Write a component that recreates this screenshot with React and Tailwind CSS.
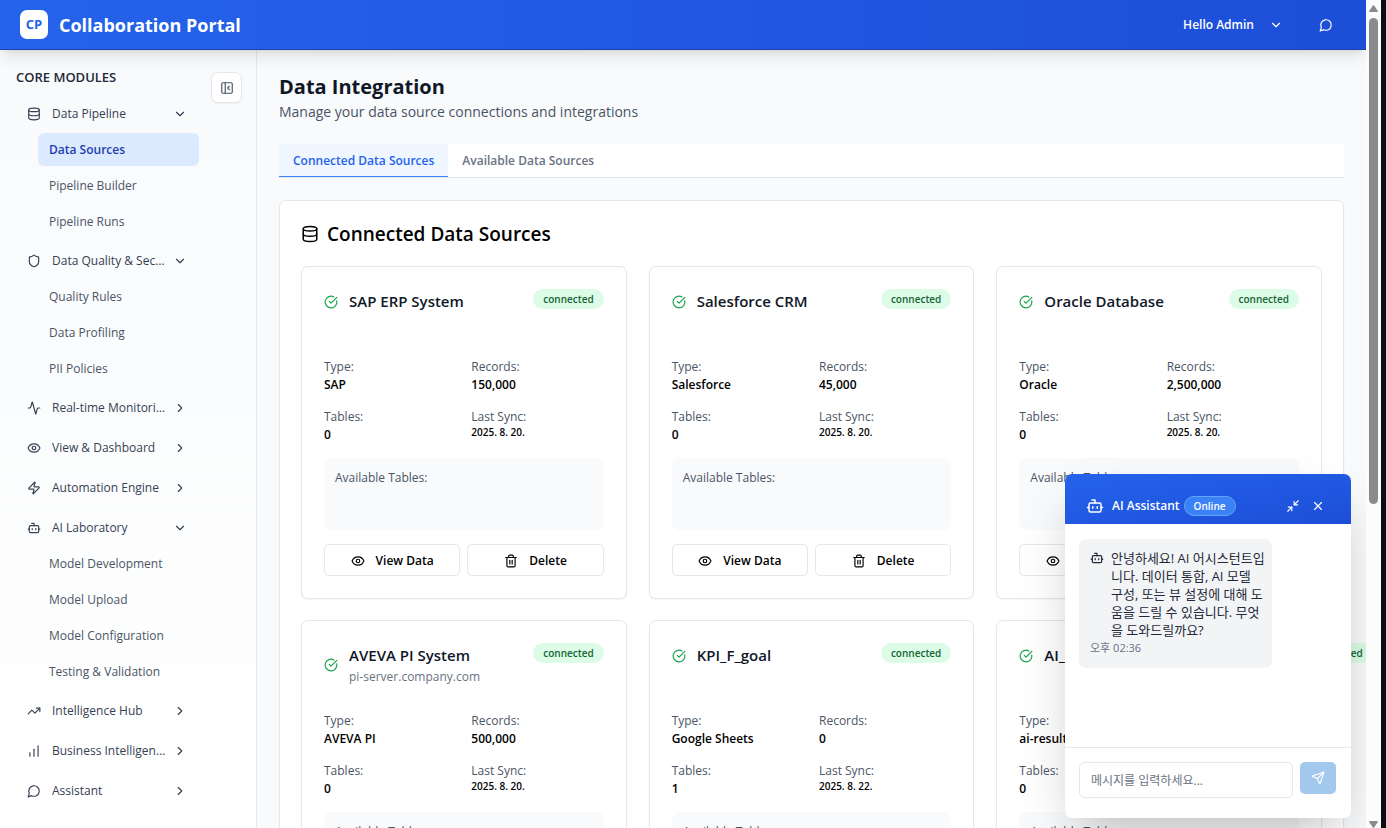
import React from "react";
import {
  Activity,
  Bot,
  ChartNoAxesColumnIncreasing,
  ChevronDown,
  ChevronRight,
  CircleCheckBig,
  Database,
  Eye,
  Minimize2,
  PanelLeftClose,
  Shield,
  Trash2,
  TrendingUp,
  X,
  Zap,
} from "lucide-react";

function ChatIcon({ className }) {
  return (
    <svg viewBox="0 0 24 24" fill="none" stroke="currentColor" strokeWidth="2" strokeLinecap="round" strokeLinejoin="round" className={className} aria-hidden="true">
      <path d="M7.9 20A9 9 0 1 0 4 16.1L2 22Z" />
    </svg>
  );
}

function SendIcon({ className }) {
  return (
    <svg viewBox="0 0 24 24" fill="none" stroke="currentColor" strokeWidth="2" strokeLinecap="round" strokeLinejoin="round" className={className} aria-hidden="true">
      <path d="M14.536 21.686a.5.5 0 0 0 .937-.024l6.5-19a.496.496 0 0 0-.635-.635l-19 6.5a.5.5 0 0 0-.024.937l7.93 3.18a2 2 0 0 1 1.112 1.11z" />
      <path d="m21.854 2.147-10.94 10.939" />
    </svg>
  );
}

const modules = [
  { label: "Data Pipeline", icon: Database, items: ["Data Sources", "Pipeline Builder", "Pipeline Runs"] },
  { label: "Data Quality & Security", icon: Shield, items: ["Quality Rules", "Data Profiling", "PII Policies"] },
  { label: "Real-time Monitoring", icon: Activity },
  { label: "View & Dashboard", icon: Eye },
  { label: "Automation Engine", icon: Zap },
  { label: "AI Laboratory", icon: Bot, items: ["Model Development", "Model Upload", "Model Configuration", "Testing & Validation"] },
  { label: "Intelligence Hub", icon: TrendingUp },
  { label: "Business Intelligence", icon: ChartNoAxesColumnIncreasing },
  { label: "Assistant", icon: ChatIcon },
];

const sources = [
  { name: "SAP ERP System", type: "SAP", records: "150,000", tables: "0", sync: "2025. 8. 20." },
  { name: "Salesforce CRM", type: "Salesforce", records: "45,000", tables: "0", sync: "2025. 8. 20." },
  { name: "Oracle Database", type: "Oracle", records: "2,500,000", tables: "0", sync: "2025. 8. 20." },
  { name: "AVEVA PI System", host: "pi-server.company.com", type: "AVEVA PI", records: "500,000", tables: "0", sync: "2025. 8. 20." },
  { name: "KPI_F_goal", type: "Google Sheets", records: "0", tables: "1", sync: "2025. 8. 22." },
  { name: "AI_Result", wide: true, type: "ai-result", records: "0", tables: "0", sync: "2025. 8. 22." },
];

function Header() {
  return (
    <header className="relative z-10 flex h-[50px] shrink-0 items-center justify-between border-b border-[#1e40af] bg-linear-to-r from-[#2563eb] to-[#1d4ed8] pr-[33px] pl-5 text-white shadow-lg">
      <div className="flex items-center gap-[11px]">
        <div className="flex h-[29px] w-7 items-center justify-center rounded-[7px] bg-white text-[13px] font-bold text-[#2563eb]">CP</div>
        <span className="text-[18px] leading-6 font-bold">Collaboration Portal</span>
      </div>
      <div className="flex items-center gap-9">
        <button type="button" className="flex items-center gap-[15px] text-[12px] font-semibold">
          Hello Admin
          <ChevronDown className="size-3.5" />
        </button>
        <button type="button" aria-label="Messages">
          <ChatIcon className="size-3.5" />
        </button>
      </div>
    </header>
  );
}

function Sidebar() {
  return (
    <aside className="flex w-[257px] shrink-0 items-start gap-3 border-r border-gray-200 bg-linear-to-b from-[#f8fafc] to-white pr-3.5 pl-4">
      <nav className="min-w-0 flex-1 pt-[18px]" aria-label="Core modules">
        <h2 className="mb-[9px] text-[13px] leading-[18px] font-semibold text-gray-800">CORE MODULES</h2>
        <ul className="flex flex-col gap-[3px]">
          {modules.map(({ label, icon: Icon, items }) => (
            <li key={label}>
              <button type="button" className="flex h-[37px] w-full items-center gap-[11px] pr-3 pl-[11px] text-left text-[12px] text-gray-700">
                <Icon className="size-3.5 shrink-0" />
                <span className="-mr-1 min-w-0 flex-1 truncate">{label}</span>
                {items ? <ChevronDown className="size-3.5 shrink-0" /> : <ChevronRight className="size-3.5 shrink-0" />}
              </button>
              {items && (
                <ul className="mt-px ml-[22px] flex flex-col gap-[3px] pb-px">
                  {items.map((item) => (
                    <li key={item}>
                      <a
                        href="#"
                        className={
                          item === "Data Sources"
                            ? "flex h-[33px] items-center rounded-md bg-[#dbeafe] px-[11px] text-[12px] font-semibold text-[#1e40af]"
                            : "flex h-[33px] items-center rounded-md px-[11px] text-[12px] text-gray-600"
                        }
                      >
                        {item}
                      </a>
                    </li>
                  ))}
                </ul>
              )}
            </li>
          ))}
        </ul>
      </nav>
      <button type="button" aria-label="Collapse sidebar" className="mt-[22px] flex size-[31px] shrink-0 items-center justify-center rounded-[7px] border border-gray-200 bg-white text-gray-600 shadow-xs">
        <PanelLeftClose className="size-3.5" />
      </button>
    </aside>
  );
}

function Field({ label, value, small }) {
  return (
    <div>
      <dt className="leading-[18px] text-gray-600">{label}</dt>
      <dd className={small ? "text-[10px] leading-3 font-semibold text-black" : "leading-[18px] font-semibold text-black"}>{value}</dd>
    </div>
  );
}

function SourceCard({ source }) {
  return (
    <article className="min-w-0 rounded-[7px] border border-gray-200 bg-white p-[22px] text-[12px] shadow-xs">
      <div className="mb-[23px] flex min-h-[46px] items-start justify-between">
        <div className="flex shrink-0 items-center gap-[11px]">
          <CircleCheckBig className="size-3.5 text-[#16a34a]" />
          <div className={source.wide ? "w-[258px]" : ""}>
            <h3 className="text-[15px] leading-[25px] font-semibold text-gray-900">{source.name}</h3>
            {source.host && <p className="leading-[18px] text-gray-500">{source.host}</p>}
          </div>
        </div>
        <span className="shrink-0 rounded-full bg-[#dcfce7] px-2.5 text-[10px] leading-5 font-semibold text-[#166534]">connected</span>
      </div>
      <dl className="grid grid-cols-2 gap-x-[15px] gap-y-3.5">
        <Field label="Type:" value={source.type} />
        <Field label="Records:" value={source.records} />
        <Field label="Tables:" value={source.tables} />
        <Field label="Last Sync:" value={source.sync} small />
      </dl>
      <div className="mt-3.5 h-[72px] rounded-[7px] bg-[#f8fafc] p-[11px] leading-[18px] text-gray-600">Available Tables:</div>
      <div className="mt-3.5 grid grid-cols-2 gap-[7px]">
        <button type="button" className="flex h-8 items-center justify-center gap-[11px] rounded-[5px] border border-gray-200 bg-white pt-px font-semibold text-black">
          <Eye className="size-3.5" />
          View Data
        </button>
        <button type="button" className="flex h-8 items-center justify-center gap-[11px] rounded-[5px] border border-gray-200 bg-white pt-px font-semibold text-black">
          <Trash2 className="size-3.5" />
          Delete
        </button>
      </div>
    </article>
  );
}

function Content() {
  return (
    <main className="min-w-0 flex-1 overflow-hidden bg-[#f8fafc] p-[22px]">
      <h1 className="text-[20px] leading-[30px] font-bold text-gray-900">Data Integration</h1>
      <p className="text-[14px] leading-5 text-gray-600">Manage your data source connections and integrations</p>
      <div role="tablist" className="mt-[22px] flex border-b border-gray-200 bg-white text-[12px] font-semibold">
        <button type="button" role="tab" aria-selected="true" className="h-[33px] border-b border-[#3b82f6] bg-[#eff6ff] px-3.5 pt-px text-[#2563eb]">
          Connected Data Sources
        </button>
        <button type="button" role="tab" aria-selected="false" className="h-[33px] px-3.5 text-gray-500">
          Available Data Sources
        </button>
      </div>
      <section className="mt-[22px] rounded-[7px] border border-gray-200 bg-white p-[21px] shadow-xs">
        <h2 className="mb-5 flex items-center gap-2 text-[19px] leading-6 font-semibold text-black">
          <Database className="size-[18px]" />
          Connected Data Sources
        </h2>
        <div className="grid grid-cols-3 gap-x-[22px] gap-y-[21px]">
          {sources.map((source) => (
            <SourceCard key={source.name} source={source} />
          ))}
        </div>
      </section>
    </main>
  );
}

function ChatPanel() {
  return (
    <aside aria-label="AI Assistant" className="absolute right-[15px] bottom-2.5 z-20 flex h-[344px] w-[286px] flex-col overflow-hidden rounded-[7px] bg-white text-[12px] shadow-2xl">
      <div className="flex h-[50px] shrink-0 items-center bg-linear-to-br from-[#2563eb] to-[#1d4ed8] pt-3.5 pr-[26px] pl-[21px] text-white">
        <Bot className="mr-2 size-[18px]" />
        <span className="font-semibold">AI Assistant</span>
        <span className="ml-1 rounded-full border border-[#60a5fa] bg-[#3b82f6] px-[9px] text-[10px] leading-[18px] font-semibold">Online</span>
        <div className="ml-auto flex items-center gap-[11px]">
          <button type="button" aria-label="Minimize">
            <Minimize2 className="size-3.5" />
          </button>
          <button type="button" aria-label="Close">
            <X className="size-3.5" />
          </button>
        </div>
      </div>
      <div className="flex-1 px-3.5 py-[15px]">
        <div className="w-[193px] rounded-[7px] bg-gray-100 pt-2.5 pr-[5px] pb-[11px] pl-[11px] text-gray-800">
          <div className="flex items-start gap-[7px]">
            <Bot className="mt-0.5 size-3.5 shrink-0" />
            <p className="min-w-0 text-[13px] leading-[18px] whitespace-nowrap">
              안녕하세요! AI 어시스턴트입
              <br />
              니다. 데이터 통합, AI 모델
              <br />
              구성, 또는 뷰 설정에 대해 도
              <br />
              움을 드릴 수 있습니다. 무엇
              <br />
              을 도와드릴까요?
            </p>
          </div>
          <time className="block text-[11px] leading-[18px] text-gray-500">오후 02:36</time>
        </div>
      </div>
      <form className="flex h-[71px] shrink-0 items-start gap-[7px] border-t border-gray-200 px-[15px] pt-3.5 pl-3.5" onSubmit={(e) => e.preventDefault()}>
        <input type="text" aria-label="메시지" placeholder="메시지를 입력하세요..." className="h-9 min-w-0 flex-1 rounded-[5px] border border-gray-200 px-[11px] text-[12px] placeholder:text-gray-500" />
        <button type="submit" aria-label="Send" className="flex h-8 w-9 shrink-0 items-center justify-center rounded-[5px] bg-[#a3c8ed] text-white">
          <SendIcon className="size-3.5" />
        </button>
      </form>
    </aside>
  );
}

function ScrollRail() {
  return (
    <div className="flex w-5 shrink-0 border-r-[5px] border-[#0c0d15] bg-[#fcfcfc]" aria-hidden="true">
      <div className="flex w-full flex-col items-center pt-[5px] text-[#8b8b8b]">
        <svg viewBox="0 0 9 7" className="h-[7px] w-[9px]" fill="currentColor">
          <path d="M3.8.6a.9.9 0 0 1 1.4 0L8.8 6c.3.5 0 1-.5 1H.7C.2 7-.1 6.5.2 6z" />
        </svg>
        <div className="mt-1.5 h-[59%] w-[9px] rounded-full bg-[#8b8b8b]" />
        <svg viewBox="0 0 9 7" className="mt-auto h-[7px] w-[9px]" fill="currentColor">
          <path d="M3.8 6.4a.9.9 0 0 0 1.4 0L8.8 1c.3-.5 0-1-.5-1H.7C.2 0-.1.5.2 1z" />
        </svg>
      </div>
    </div>
  );
}

export default function App() {
  return (
    <div className="flex h-screen overflow-hidden bg-[#f8fafc] font-['Open_Sans','Noto_Sans_CJK_KR',sans-serif]">
      <div className="relative flex min-w-0 flex-1 flex-col overflow-hidden">
        <Header />
        <div className="flex min-h-0 flex-1">
          <Sidebar />
          <Content />
        </div>
        <ChatPanel />
      </div>
      <ScrollRail />
    </div>
  );
}
